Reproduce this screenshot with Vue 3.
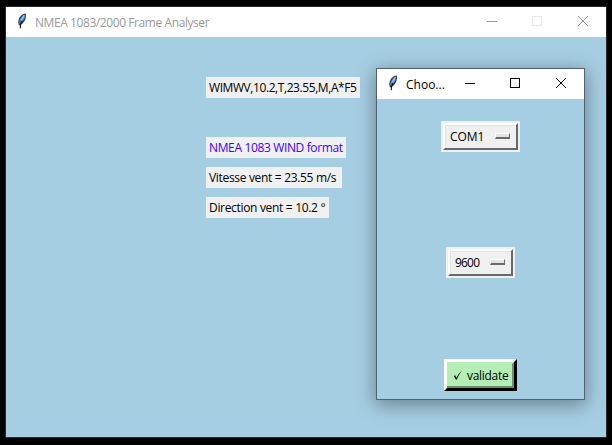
<script setup>
const labels = [
  { text: 'WIMWV,10.2,T,23.55,M,A*F5', name: 'raw' },
  { text: 'NMEA 1083 WIND format', name: 'format' },
  { text: 'Vitesse vent = 23.55 m/s', name: 'speed' },
  { text: 'Direction vent = 10.2 °', name: 'direction' },
]
</script>

<template>
  <div class="desktop">
    <main class="window main-window">
      <header class="titlebar">
        <svg class="feather" viewBox="0 0 10 16">
          <path d="M9 .5C5 .8 1.600 4 1.200 9.500L2 12.500C7 11 9.600 5 9 .5Z" fill="#30343c" />
          <path d="M8.300 1.200C4.800 2.300 2.100 6 2 11C6 9 8.500 5 8.300 1.200Z" fill="#4a8ad4" />
          <path d="M7.200 2.500L4 7.500" stroke="#a6cdf2" stroke-width="1.300" />
          <path d="M5 8Q3.300 10 3.300 15.300" fill="none" stroke="#111" stroke-width="1.100" />
        </svg>
        <span class="title">NMEA 1083/2000 Frame Analyser</span>
        <div class="controls">
          <svg viewBox="0 0 10 10"><path d="M0 5.500H10" /></svg>
          <svg class="maximize disabled" viewBox="0 0 10 10"><rect x=".5" y=".5" width="9" height="9" /></svg>
          <svg viewBox="0 0 10 10"><path d="M0 0L10 10M10 0L0 10" /></svg>
        </div>
      </header>
      <section class="readings">
        <div v-for="label in labels" :key="label.name" class="label" :class="label.name"><span>{{ label.text }}</span></div>
      </section>
    </main>

    <aside class="window dialog">
      <header class="titlebar">
        <svg class="feather" viewBox="0 0 10 16">
          <path d="M9 .5C5 .8 1.600 4 1.200 9.500L2 12.500C7 11 9.600 5 9 .5Z" fill="#30343c" />
          <path d="M8.300 1.200C4.800 2.300 2.100 6 2 11C6 9 8.500 5 8.300 1.200Z" fill="#4a8ad4" />
          <path d="M7.200 2.500L4 7.500" stroke="#a6cdf2" stroke-width="1.300" />
          <path d="M5 8Q3.300 10 3.300 15.300" fill="none" stroke="#111" stroke-width="1.100" />
        </svg>
        <span class="title">Choo...</span>
        <div class="controls">
          <svg viewBox="0 0 10 10"><path d="M0 5.500H10" /></svg>
          <svg class="maximize" viewBox="0 0 10 10"><rect x=".5" y=".5" width="9" height="9" /></svg>
          <svg viewBox="0 0 10 10"><path d="M0 0L10 10M10 0L0 10" /></svg>
        </div>
      </header>
      <section class="form">
        <div class="option port"><div class="face"><span>COM1</span><i></i></div></div>
        <div class="option baud"><div class="face"><span>9600</span><i></i></div></div>
        <button class="validate">
          <span class="inner">
            <svg viewBox="0 0 10 12"><path d="M.8 7L2.200 6.300L3.300 9Q5.500 4.500 9 1.500Q5.800 5.500 3.800 10.600H2.800Z" fill="#000" /></svg>
            <span class="caption">validate</span>
          </span>
        </button>
      </section>
    </aside>
  </div>
</template>

<style>
body { background: #000; }
</style>

<style scoped>
* { box-sizing: border-box; }
.desktop {
  position: relative;
  width: 612px;
  height: 445px;
  overflow: hidden;
  padding: 6px 5px;
  background: #000;
  font: 12px/15px "Open Sans", "Noto Sans", sans-serif;
  color: #000;
}
.window { background: #a6cee3; }
.main-window { width: 602px; height: 432px; border: 1px solid #292c2e; }
.dialog {
  position: absolute;
  left: 376px;
  top: 68px;
  width: 209px;
  height: 332px;
  border: 1px solid #516370;
  box-shadow: 0 4px 18px 1px rgba(0, 0, 0, .37);
}
.titlebar { display: flex; align-items: center; height: 30px; background: #fff; padding-left: 11px; }
.feather { width: 10px; height: 16px; flex: none; margin-bottom: 2px; }
.title { margin-left: 8px; white-space: nowrap; letter-spacing: 0; }
.main-window .title { color: #999; letter-spacing: -.42px; }
.controls { display: flex; margin: 0 18px 2px auto; }
.controls svg { width: 10px; height: 10px; fill: none; stroke: #000; stroke-width: 1; }
.controls .maximize { margin: 0 36px 0 35px; }
.main-window .controls svg { stroke: #999; }
.main-window .controls .disabled { stroke: #e9e9e9; }
.readings { display: flex; flex-direction: column; align-items: flex-start; gap: 9px; padding: 40px 0 0 200px; }
.label { height: 21px; padding: 3px; background: #f0f0f0; white-space: nowrap; letter-spacing: -.32px; }
.raw { width: 154px; margin-bottom: 30px; letter-spacing: -.42px; }
.format { width: 140px; color: #4400ff; letter-spacing: -.36px; }
.speed { width: 136px; }
.direction { width: 123px; }
.form { display: flex; flex-direction: column; align-items: flex-start; }
.option { height: 31px; padding: 2px; background: #f0f0f0; }
.port { width: 79px; margin: 22px 0 0 64px; }
.baud { width: 69px; margin: 95px 0 0 69px; }
.face {
  display: flex;
  align-items: center;
  justify-content: space-between;
  height: 27px;
  padding: 0 6px 0 5px;
  border: 2px solid;
  border-color: #fff #696969 #696969 #fff;
  box-shadow: inset 1px 1px #e3e3e3;
  letter-spacing: -.1px;
}
.baud .face { letter-spacing: -.8px; }
.face i { width: 15px; height: 6px; margin-bottom: 1px; border: 2px solid; border-color: #fff #696969 #696969 #fff; border-width: 1px 1px 2px 1px; background: #e3e3e3; }
.validate {
  width: 73px;
  height: 32px;
  margin: 81px 0 0 67px;
  padding: 0;
  border: 3px solid;
  border-color: #fff #000 #000 #fff;
  border-radius: 0;
  background: #b4eeb4;
  font: inherit;
  color: #000;
}
.inner { display: flex; align-items: center; height: 26px; padding-left: 6px; border: 2px solid; border-color: #b4eeb4 #6c8f6c #6c8f6c #b4eeb4; border-left-width: 0; }
.inner svg { width: 10px; height: 12px; flex: none; margin-bottom: 1px; }
.caption { margin-left: 4px; letter-spacing: -.3px; }
</style>
